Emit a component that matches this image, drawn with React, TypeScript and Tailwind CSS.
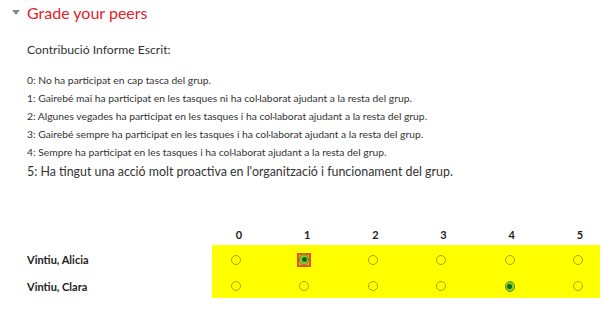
import React from "react";

const font = { fontFamily: 'Lato, "Open Sans", sans-serif' };

const criteria = [
  "0: No ha participat en cap tasca del grup.",
  "1: Gairebé mai ha participat en les tasques ni ha col·laborat ajudant a la resta del grup.",
  "2: Algunes vegades ha participat en les tasques i ha col·laborat ajudant a la resta del grup.",
  "3: Gairebé sempre ha participat en les tasques i ha col·laborat ajudant a la resta del grup.",
  "4: Sempre ha participat en les tasques i ha col·laborat ajudant a la resta del grup.",
];

function Radio({ checked, focused }: { checked?: boolean; focused?: boolean }) {
  if (checked) {
    const dot = (
      <span className="flex h-[11px] w-[11px] items-center justify-center rounded-full border border-[#5e9e14] bg-[#8cc63f]">
        <span className="h-[5px] w-[5px] rounded-full bg-[#0b6e0b]" />
      </span>
    );
    if (focused) {
      return (
        <span className="relative flex h-[10px] w-[10px] items-center justify-center">
          <span className="absolute left-[-2px] top-[-2px] flex h-[14px] w-[14px] items-center justify-center border-2 border-[#e8521c] bg-[#f2a01a]">
            {dot}
          </span>
        </span>
      );
    }
    return <span className="flex h-[10px] w-[10px] items-center justify-center">{dot}</span>;
  }
  return <span className="h-[10px] w-[10px] rounded-full border border-[#a9a300]" />;
}

const names: { name: string; sel: number; focused?: boolean }[] = [
  { name: "Vintiu, Alicia", sel: 1, focused: true },
  { name: "Vintiu, Clara", sel: 4 },
];

export default function App() {
  return (
    <div className="h-[312px] w-[613px] overflow-hidden bg-white text-[#333]" style={font}>
      <div className="flex h-[26px] items-center pl-[12px]">
        <svg width="8" height="5" viewBox="0 0 8 5" className="mr-[7px] mt-[-2px]">
          <polygon points="0,0 8,0 4,5" fill="#8a8a8a" />
        </svg>
        <h2 className="text-[16px] leading-none text-[#e1222b]">Grade your peers</h2>
      </div>
      <div className="pl-[27px]">
        <div className="mt-[15px] text-[12.2px] leading-[18px]">Contribució Informe Escrit:</div>
        <div className="mt-[12px] text-[10.3px]">
          {criteria.map((c) => (
            <div key={c} className="h-[18px] leading-[18px]">
              {c}
            </div>
          ))}
          <div className="mt-[1px] h-[20px] text-[12.4px] leading-[20px]">
            5: Ha tingut una acció molt proactiva en l'organització i funcionament del grup.
          </div>
        </div>
      </div>
      <div className="mt-[44px]">
        <div className="flex h-[19px] items-center">
          <div className="w-[212px]" />
          <div className="flex w-[388px] justify-between pl-[22px] pr-[15px] text-[11px] font-bold text-[#222]">
            {[0, 1, 2, 3, 4, 5].map((n) => (
              <span key={n} className="w-[10px] text-center">
                {n}
              </span>
            ))}
          </div>
        </div>
        {names.map((r) => (
          <div key={r.name} className="flex h-[26.5px] items-center">
            <div className="w-[212px] pl-[27px] pt-[4px] text-[11px] font-bold text-[#222]">{r.name}</div>
            <div className="flex h-full w-[388px] items-center justify-between bg-[#ffff00] pl-[19px] pr-[17px] pt-[3px]">
              {[0, 1, 2, 3, 4, 5].map((n) => (
                <Radio key={n} checked={n === r.sel} focused={n === r.sel && r.focused} />
              ))}
            </div>
          </div>
        ))}
      </div>
    </div>
  );
}
